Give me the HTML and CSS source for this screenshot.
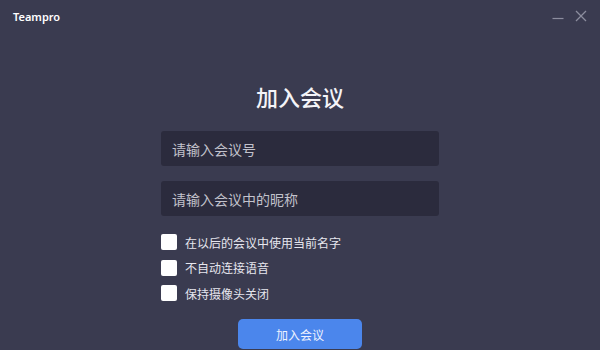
FILE: index.html
```html
<!DOCTYPE html>
<html lang="zh-CN">

<head>
  <meta charset="UTF-8" />
  <meta name="viewport" content="width=device-width, initial-scale=1.0" />
  <title>Teampro - 加入会议</title>
  <link rel="stylesheet" href="styles.css">
</head>

<body>
  <div class="titlebar">
    <span class="app-name">Teampro</span>
    <div class="win-controls">
      <svg class="win-btn" width="12" height="12" viewBox="0 0 12 12">
        <line x1="0.5" y1="8.5" x2="11.5" y2="8.5" stroke="#8c8d9e" stroke-width="1.2" />
      </svg>
      <svg class="win-btn" width="12" height="12" viewBox="0 0 12 12">
        <line x1="1" y1="1" x2="11" y2="11" stroke="#8c8d9e" stroke-width="1.3" />
        <line x1="11" y1="1" x2="1" y2="11" stroke="#8c8d9e" stroke-width="1.3" />
      </svg>
    </div>
  </div>

  <div class="main">
    <h1>加入会议</h1>

    <div class="form">
      <input type="text" class="field" placeholder="请输入会议号" />
      <input type="text" class="field" placeholder="请输入会议中的昵称" />

      <div class="options">
        <label class="option"><span class="box"></span>在以后的会议中使用当前名字</label>
        <label class="option"><span class="box"></span>不自动连接语音</label>
        <label class="option"><span class="box"></span>保持摄像头关闭</label>
      </div>

      <button class="join-btn">加入会议</button>
    </div>
  </div>
</body>

</html>
```

FILE: styles.css
```css
* {
  box-sizing: border-box;
}

html,
body {
  height: 100%;
}

body {
  margin: 0;
  font-family: "Noto Sans CJK SC", "Noto Sans", sans-serif;
  background: #3a3b50;
  color: #fff;
  overflow: hidden;
}

.titlebar {
  height: 34px;
  display: flex;
  align-items: center;
  justify-content: space-between;
  padding: 0 13px 2px 13px;
}

.app-name {
  font-family: "Noto Sans", sans-serif;
  font-size: 11px;
  font-weight: 600;
  color: #fff;
}

.win-controls {
  display: flex;
  gap: 11px;
  align-items: center;
}

.main {
  display: flex;
  flex-direction: column;
  align-items: center;
}

h1 {
  margin: 46px 0 0;
  font-size: 22px;
  font-weight: 500;
  line-height: 33px;
  color: #f4f4f8;
}

.form {
  width: 278px;
  margin-top: 18px;
  display: flex;
  flex-direction: column;
}

.field {
  height: 35px;
  border: none;
  border-radius: 3px;
  background: #2b2b3d;
  padding: 0 11px;
  font-family: inherit;
  font-size: 14px;
  color: #fff;
  outline: none;
}

.field + .field {
  margin-top: 15px;
}

.field::placeholder {
  color: #c2c2cc;
}

.options {
  margin-top: 18px;
  display: flex;
  flex-direction: column;
  gap: 9.5px;
}

.option {
  display: flex;
  align-items: center;
  height: 16px;
  font-size: 12px;
  color: #e6e6ee;
}

.box {
  width: 16px;
  height: 16px;
  background: #fff;
  border-radius: 2px;
  margin-right: 8px;
  flex: none;
}

.join-btn {
  align-self: center;
  margin-top: 18px;
  width: 124px;
  height: 30px;
  border: none;
  border-radius: 5px;
  background: #4b86ec;
  color: #eef3ff;
  font-family: inherit;
  font-size: 12px;
  cursor: pointer;
}
```
